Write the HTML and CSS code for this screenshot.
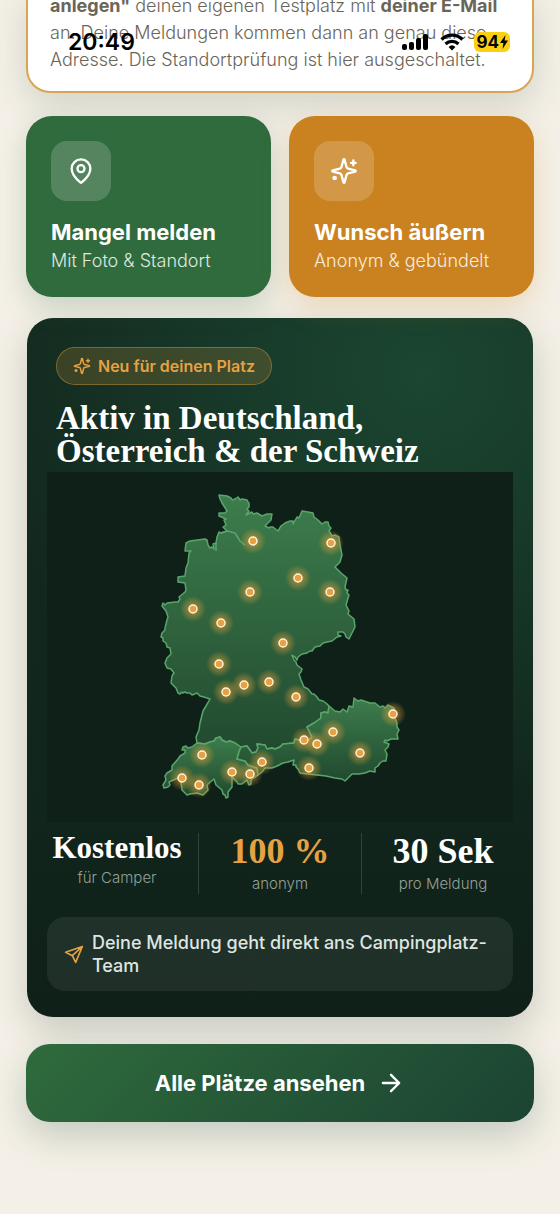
FILE: index.html
```html
<!DOCTYPE html>
<html lang="de">
<head>
    <meta charset="UTF-8">
    <meta name="viewport" content="width=device-width, initial-scale=1.0">
    <title>Campingplatz Meldungen</title>
    <link rel="stylesheet" href="styles.css">
</head>
<body>
    <!-- Status bar lies over the scrolled page -->
    <div class="status-bar">
        <span class="status-time">20:49</span>
        <div class="status-icons">
            <svg width="28" height="20" viewBox="0 0 28 20" aria-hidden="true">
                <rect x="0" y="12" width="5" height="6" rx="2"/>
                <rect x="7" y="10" width="5" height="8" rx="2"/>
                <rect x="14" y="6" width="5" height="12" rx="2"/>
                <rect x="21" y="2" width="5" height="16" rx="2"/>
            </svg>
            <svg width="24" height="20" viewBox="0 0 24 20" aria-hidden="true">
                <path d="M1.5 7.5a15 15 0 0 1 21 0M5.5 12a9.5 9.5 0 0 1 13 0" fill="none" stroke="#000" stroke-width="3.2"/>
                <path d="M12 18.500l-3.400-3.600a5 5 0 0 1 6.800 0z"/>
            </svg>
            <span class="battery">94<svg width="8" height="14" viewBox="0 0 8 14" aria-hidden="true"><path d="M5.5 0L0 8h3.400L2.500 14 8 5.600H4.600z"/></svg></span>
        </div>
    </div>

    <main class="page">
        <section class="notice">
            <p><strong>anlegen"</strong> deinen eigenen Testplatz mit <strong>deiner E-Mail</strong><br>
            an. Deine Meldungen kommen dann an genau diese<br>
            Adresse. Die Standortprüfung ist hier ausgeschaltet.</p>
        </section>

        <div class="actions">
            <button class="action action-green" type="button">
                <span class="action-icon">
                    <svg class="icon" width="28" height="28" viewBox="0 0 24 24" aria-hidden="true">
                        <path d="M20 10c0 4.990-5.540 10.190-7.400 11.800a1 1 0 0 1-1.200 0C9.540 20.190 4 14.990 4 10a8 8 0 0 1 16 0"/>
                        <circle cx="12" cy="10" r="3"/>
                    </svg>
                </span>
                <span class="action-title">Mangel melden</span>
                <span class="action-sub">Mit Foto &amp; Standort</span>
            </button>
            <button class="action action-orange" type="button">
                <span class="action-icon">
                    <svg class="icon" width="28" height="28" viewBox="0 0 24 24" aria-hidden="true">
                        <path d="M9.900 15.500A2 2 0 0 0 8.500 14.100l-6.100-1.600a.5.5 0 0 1 0-1l6.100-1.600A2 2 0 0 0 9.900 8.500l1.600-6.100a.5.5 0 0 1 1 0l1.600 6.100a2 2 0 0 0 1.400 1.400l6.100 1.600a.5.5 0 0 1 0 1l-6.100 1.600a2 2 0 0 0-1.400 1.400l-1.600 6.100a.5.5 0 0 1-1 0z"/>
                        <path d="M20 3v4M22 5h-4"/>
                        <circle cx="4" cy="18" r="1"/>
                    </svg>
                </span>
                <span class="action-title">Wunsch äußern</span>
                <span class="action-sub">Anonym &amp; gebündelt</span>
            </button>
        </div>

        <section class="hero">
            <div class="hero-head">
                <span class="badge">
                    <svg class="icon" width="18" height="18" viewBox="0 0 24 24" aria-hidden="true">
                        <path d="M9.900 15.500A2 2 0 0 0 8.500 14.100l-6.100-1.600a.5.5 0 0 1 0-1l6.100-1.600A2 2 0 0 0 9.900 8.500l1.600-6.100a.5.5 0 0 1 1 0l1.600 6.100a2 2 0 0 0 1.400 1.400l6.100 1.600a.5.5 0 0 1 0 1l-6.100 1.600a2 2 0 0 0-1.400 1.400l-1.600 6.100a.5.5 0 0 1-1 0z"/>
                        <path d="M20 3v4M22 5h-4"/>
                        <circle cx="4" cy="18" r="1"/>
                    </svg>
                    Neu für deinen Platz
                </span>
                <h2>Aktiv in Deutschland,<br>Österreich &amp; der Schweiz</h2>
            </div>

            <svg class="map" viewBox="47 472 466 350" role="img" aria-label="Karte von Deutschland, Österreich und der Schweiz">
                <defs>
                    <linearGradient id="land" x1="0" y1="0" x2="0" y2="1">
                        <stop offset="0" stop-color="#3d7d4c"/>
                        <stop offset="1" stop-color="#21492f"/>
                    </linearGradient>
                    <radialGradient id="glow">
                        <stop offset="0.3" stop-color="#e9a23b" stop-opacity="0.5"/>
                        <stop offset="0.65" stop-color="#e9a23b" stop-opacity="0.26"/>
                        <stop offset="1" stop-color="#e9a23b" stop-opacity="0"/>
                    </radialGradient>
                    <g id="pin">
                        <circle r="13" fill="url(#glow)"/>
                        <circle r="4" fill="#e9a040" stroke="#fff3dc" stroke-width="1.500"/>
                    </g>
                </defs>
                <g class="land">
                    <!-- Deutschland -->
                    <path d="M219 495L227 496 231 498 232 500 235 499 238 497 240 500 242 499 247 500 248 502 249 503 249 507 247 509 249 511 246 515 252 512 253 514 257 513 262 516 267 514 272 514 271 520 265 526 269 528 270 527 273 527 278 531 281 526 285 523 290 521 293 521 293 524 297 517 299 518 302 511 308 512 313 513 314 517 318 520 322 524 325 522 328 522 329 526 331 528 329 531 332 536 335 535 339 537 340 545 342 555 340 562 335 567 341 573 347 578 345 587 346 590 348 590 347 593 349 595 346 605 349 611 348 614 354 619 355 627 352 633 349 639 346 637 345 634 343 632 338 632 338 635 341 636 337 637 332 641 327 642 323 643 320 646 315 647 312 651 310 651 307 653 302 654 298 657 297 660 295 657 292 655 294 660 296 662 297 665 302 669 301 672 299 674 301 680 304 687 308 689 312 694 314 694 317 697 319 700 323 701 326 703 329 706 328 713 325 712 321 713 321 718 314 723 307 727 309 731 312 737 307 742 302 741 295 739 294 743 283 744 280 747 275 749 272 748 267 749 265 745 257 744 258 748 256 752 252 753 247 746 240 747 235 743 230 741 226 742 222 740 220 737 216 738 214 741 210 742 205 744 197 743 196 737 199 730 200 723 203 711 206 706 210 699 204 697 200 696 197 693 192 695 190 693 187 693 185 692 183 693 182 692 180 694 178 693 176 688 171 683 172 676 174 673 171 669 167 668 165 663 167 658 171 654 170 648 167 647 166 643 163 641 163 638 161 637 162 633 165 630 165 628 167 620 168 617 166 611 162 606 163 603 165 605 167 603 175 602 178 602 180 599 179 597 185 592 186 590 185 583 178 582 178 577 185 576 186 568 188 563 189 553 191 551 185 551 186 543 190 541 205 539 207 540 208 545 210 548 212 547 214 549 213 544 216 543 217 537 219 532 221 533 227 531 223 527 226 525 224 520 226 519 219 516 219 513 225 513 227 511 222 503 220 499z"/>
                    <path class="river" d="M221 533L227 531 235 533 240 541 245 545M216 543L216 551"/>
                    <!-- Schweiz -->
                    <path d="M197 743L192 747 188 748 186 746 183 747 182 750 185 750 185 753 180 756 178 759 172 766 172 770 167 773 165 776 166 780 163 785 164 788 168 787 170 785 169 782 178 778 181 783 182 790 187 795 190 794 197 793 203 795 208 790 207 786 208 784 214 779 216 785 222 790 223 794 225 795 226 798 228 797 228 792 232 787 232 777 237 782 238 784 242 784 247 780 249 785 251 784 251 780 258 775 257 768 248 765 245 761 237 759 239 752 241 747 235 743 230 741 226 742 222 740 220 737 216 738 214 741 210 742 205 744z"/>
                    <!-- Österreich -->
                    <path d="M241 747L247 746 252 753 256 752 258 748 257 744 265 745 267 749 272 748 275 749 280 747 283 744 294 743 295 739 302 741 307 742 312 737 309 731 307 727 314 723 321 718 321 713 325 712 328 713 329 706 335 711 340 712 343 709 347 712 349 706 353 707 354 698 358 701 361 700 370 703 375 703 380 707 383 706 385 708 388 705 394 708 395 718 397 723 397 727 399 730 397 734 398 739 391 739 387 741 385 740 384 742 389 744 388 747 385 750 387 754 386 761 383 761 380 763 378 766 375 768 375 772 370 771 365 773 359 774 352 774 345 781 342 779 335 778 326 776 317 775 308 774 300 773 298 769 296 767 296 765 293 765 294 760 288 762 283 763 277 766 272 768 265 768 262 772 258 775 257 768 248 765 245 761 237 759 239 752z"/>
                </g>
                <use href="#pin" x="253" y="541"/>
                <use href="#pin" x="331" y="543"/>
                <use href="#pin" x="298" y="578"/>
                <use href="#pin" x="250" y="592"/>
                <use href="#pin" x="330" y="592"/>
                <use href="#pin" x="193" y="609"/>
                <use href="#pin" x="221" y="623"/>
                <use href="#pin" x="283" y="643"/>
                <use href="#pin" x="219" y="664"/>
                <use href="#pin" x="269" y="682"/>
                <use href="#pin" x="244" y="685"/>
                <use href="#pin" x="226" y="692"/>
                <use href="#pin" x="296" y="697"/>
                <use href="#pin" x="393" y="714"/>
                <use href="#pin" x="333" y="732"/>
                <use href="#pin" x="304" y="740"/>
                <use href="#pin" x="317" y="744"/>
                <use href="#pin" x="360" y="753"/>
                <use href="#pin" x="309" y="768"/>
                <use href="#pin" x="202" y="755"/>
                <use href="#pin" x="262" y="762"/>
                <use href="#pin" x="232" y="772"/>
                <use href="#pin" x="250" y="774"/>
                <use href="#pin" x="182" y="778"/>
                <use href="#pin" x="199" y="785"/>
            </svg>

            <div class="stats">
                <div class="stat">
                    <div class="stat-value stat-word">Kostenlos</div>
                    <div class="stat-label">für Camper</div>
                </div>
                <div class="divider"></div>
                <div class="stat">
                    <div class="stat-value stat-accent">100 %</div>
                    <div class="stat-label">anonym</div>
                </div>
                <div class="divider"></div>
                <div class="stat">
                    <div class="stat-value">30 Sek</div>
                    <div class="stat-label">pro Meldung</div>
                </div>
            </div>

            <div class="hint">
                <svg class="icon" width="20" height="20" viewBox="0 0 24 24" aria-hidden="true">
                    <path d="M22 3L14 22 10 14 2 10zM22 3L10 14"/>
                </svg>
                <span>Deine Meldung geht direkt ans Campingplatz-<br>Team</span>
            </div>
        </section>

        <a class="cta" href="#plaetze">
            Alle Plätze ansehen
            <svg class="icon" width="28" height="28" viewBox="0 0 24 24" aria-hidden="true">
                <path d="M5 12h14M12 5l7 7-7 7"/>
            </svg>
        </a>
    </main>
</body>
</html>
```
FILE: styles.css
```css
* {
    box-sizing: border-box;
}

body {
    margin: 0;
    font-family: Inter, "Liberation Sans", sans-serif;
    background: #f4f0e7;
    color: #6b6558;
    min-height: 100vh;
}

.icon {
    fill: none;
    stroke: currentColor;
    stroke-width: 2;
    stroke-linecap: round;
    stroke-linejoin: round;
    flex: none;
}

.status-bar {
    position: absolute;
    top: 28px;
    left: 0;
    right: 0;
    z-index: 2;
    display: flex;
    align-items: center;
    justify-content: space-between;
    padding: 0 50px 0 68px;
    color: #000;
}

.status-time {
    font-size: 23px;
    line-height: 28px;
    font-weight: 600;
}

.status-icons {
    display: flex;
    align-items: center;
    gap: 10px;
}

.battery {
    display: flex;
    align-items: center;
    gap: 1px;
    height: 20px;
    padding: 0 2px;
    border-radius: 6px;
    background: #fbd011;
    font-size: 17px;
    font-weight: 700;
}

.page {
    padding: 0 26px 92px;
}

.notice {
    margin-top: -8px;
    padding: 0 22px 18px;
    background: #fff;
    border: 2px solid #d9a453;
    border-top: none;
    border-radius: 0 0 24px 24px;
    box-shadow: 0 12px 36px rgba(30, 60, 40, 0.16);
}

.notice p {
    margin: 0;
    font-size: 18px;
    line-height: 27px;
    font-weight: 300;
    white-space: nowrap;
}

.notice strong {
    font-weight: 700;
}

.actions {
    display: grid;
    grid-template-columns: 1fr 1fr;
    gap: 18px;
    margin-top: 23px;
}

.action {
    display: flex;
    flex-direction: column;
    align-items: flex-start;
    padding: 25px 25px 23px;
    border: none;
    border-radius: 26px;
    color: #fff;
    font-family: inherit;
    text-align: left;
    white-space: nowrap;
    cursor: pointer;
}

.action-green {
    background: #2f6b3c;
    box-shadow: 0 10px 28px rgba(47, 107, 60, 0.22);
}

.action-orange {
    background: #c9821f;
    box-shadow: 0 10px 28px rgba(201, 130, 31, 0.22);
}

.action-icon {
    display: flex;
    align-items: center;
    justify-content: center;
    width: 60px;
    height: 60px;
    margin-bottom: 16px;
    border-radius: 16px;
    background: rgba(255, 255, 255, 0.18);
}

.action-title {
    font-size: 22px;
    line-height: 30px;
    font-weight: 700;
}

.action-sub {
    font-size: 18px;
    line-height: 27px;
    font-weight: 300;
    opacity: 0.85;
}

.hero {
    margin: 21px 1px 0;
    padding: 29px 20px 26px;
    border-radius: 26px;
    background:
        radial-gradient(circle at 78% 8%, #1b4631 0%, rgba(27, 70, 49, 0) 58%),
        linear-gradient(180deg, #14291f 0%, #11271d 60%, #0f2018 100%);
    box-shadow: 0 14px 36px rgba(30, 50, 35, 0.2);
    color: #fff;
}

.hero-head {
    padding: 0 9px;
}

.badge {
    display: inline-flex;
    align-items: center;
    gap: 7px;
    height: 38px;
    padding: 0 16px;
    border: 1px solid rgba(233, 162, 59, 0.4);
    border-radius: 19px;
    background: rgba(233, 162, 59, 0.18);
    color: #e5a243;
    font-size: 16px;
    font-weight: 600;
    vertical-align: top;
}

.hero h2 {
    margin: 17px 0 4px;
    font-family: "Liberation Serif", serif;
    font-size: 33px;
    line-height: 33px;
    font-weight: 700;
    white-space: nowrap;
}

.map {
    display: block;
    width: 100%;
    background: #0f2019;
}

.land path {
    fill: url(#land);
    stroke: #5aa56c;
    stroke-width: 1.5;
    stroke-linejoin: round;
}

.land .river {
    fill: none;
}

.stats {
    display: grid;
    grid-template-columns: 1fr 1px 1fr 1px 1fr;
    gap: 11px;
    margin-top: 11px;
}

.stat {
    text-align: center;
    white-space: nowrap;
}

.divider {
    background: rgba(255, 255, 255, 0.14);
}

.stat-value {
    font-family: "Liberation Serif", serif;
    font-size: 36px;
    line-height: 36px;
    font-weight: 700;
}

.stat-word {
    font-size: 31px;
    line-height: 30px;
}

.stat-accent {
    color: #e5a243;
}

.stat-label {
    margin-top: 4px;
    font-size: 15px;
    line-height: 21px;
    font-weight: 300;
    color: #94a099;
}

.hint {
    display: flex;
    align-items: center;
    gap: 8px;
    margin-top: 23px;
    padding: 14px 17px;
    border-radius: 18px;
    background: rgba(255, 255, 255, 0.07);
    color: #dfe5e1;
    font-size: 18px;
    line-height: 23px;
    font-weight: 500;
    white-space: nowrap;
}

.hint .icon {
    color: #e5a243;
}

.cta {
    display: flex;
    align-items: center;
    justify-content: center;
    gap: 12px;
    height: 78px;
    margin-top: 27px;
    border-radius: 24px;
    background: linear-gradient(135deg, #2f6b3c 0%, #1b4332 100%);
    box-shadow: 0 14px 36px rgba(27, 67, 50, 0.22);
    color: #fff;
    font-size: 22px;
    font-weight: 700;
    text-decoration: none;
}
```
